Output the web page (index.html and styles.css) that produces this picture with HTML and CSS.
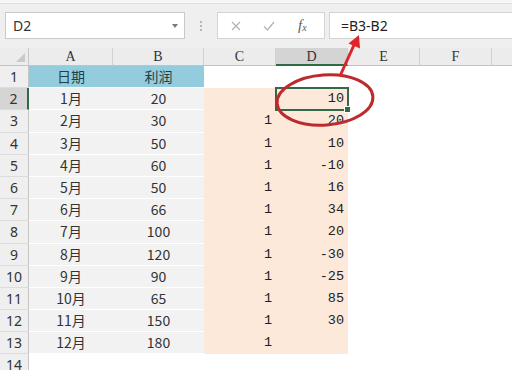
FILE: index.html
```html
<!DOCTYPE html>
<html>
<head>
<meta charset="utf-8">
<link rel="stylesheet" href="styles.css">
</head>
<body>
<div class="app">
  <div class="topstrip"></div>
  <div class="toolbar">
    <div class="namebox"><span class="name">D2</span><span class="drop"></span></div>
    <div class="grip"><i></i><i></i><i></i></div>
    <div class="fbtns">
      <svg class="ic" width="12" height="12" viewBox="0 0 12 12"><path d="M2 2L10 10M10 2L2 10" stroke="#b4b4b4" stroke-width="1.3" fill="none"/></svg>
      <svg class="ic" width="14" height="12" viewBox="0 0 14 12"><path d="M2 6.5L5.5 10L12 2" stroke="#b4b4b4" stroke-width="1.3" fill="none"/></svg>
      <span class="fx">f<sub>x</sub></span>
    </div>
    <div class="formula">=B3-B2</div>
  </div>
  <div class="sheet">
    <div class="ch corner"><span class="tri"></span></div>
    <div class="ch">A</div><div class="ch">B</div><div class="ch">C</div><div class="ch sel">D</div><div class="ch">E</div><div class="ch">F</div><div class="ch last"></div>

    <div class="rh">1</div><div class="c hd">日期</div><div class="c hd">利润</div><div class="c"></div><div class="c"></div><div class="c"></div><div class="c"></div><div class="c"></div>

    <div class="rh sel">2</div><div class="c ab">1月</div><div class="c ab">20</div><div class="c pe num"></div><div class="c pe num active">10</div><div class="c"></div><div class="c"></div><div class="c"></div>
    <div class="rh">3</div><div class="c ab">2月</div><div class="c ab">30</div><div class="c pe num">1</div><div class="c pe num">20</div><div class="c"></div><div class="c"></div><div class="c"></div>
    <div class="rh">4</div><div class="c ab">3月</div><div class="c ab">50</div><div class="c pe num">1</div><div class="c pe num">10</div><div class="c"></div><div class="c"></div><div class="c"></div>
    <div class="rh">5</div><div class="c ab">4月</div><div class="c ab">60</div><div class="c pe num">1</div><div class="c pe num">-10</div><div class="c"></div><div class="c"></div><div class="c"></div>
    <div class="rh">6</div><div class="c ab">5月</div><div class="c ab">50</div><div class="c pe num">1</div><div class="c pe num">16</div><div class="c"></div><div class="c"></div><div class="c"></div>
    <div class="rh">7</div><div class="c ab">6月</div><div class="c ab">66</div><div class="c pe num">1</div><div class="c pe num">34</div><div class="c"></div><div class="c"></div><div class="c"></div>
    <div class="rh">8</div><div class="c ab">7月</div><div class="c ab">100</div><div class="c pe num">1</div><div class="c pe num">20</div><div class="c"></div><div class="c"></div><div class="c"></div>
    <div class="rh">9</div><div class="c ab">8月</div><div class="c ab">120</div><div class="c pe num">1</div><div class="c pe num">-30</div><div class="c"></div><div class="c"></div><div class="c"></div>
    <div class="rh">10</div><div class="c ab">9月</div><div class="c ab">90</div><div class="c pe num">1</div><div class="c pe num">-25</div><div class="c"></div><div class="c"></div><div class="c"></div>
    <div class="rh">11</div><div class="c ab">10月</div><div class="c ab">65</div><div class="c pe num">1</div><div class="c pe num">85</div><div class="c"></div><div class="c"></div><div class="c"></div>
    <div class="rh">12</div><div class="c ab">11月</div><div class="c ab">150</div><div class="c pe num">1</div><div class="c pe num">30</div><div class="c"></div><div class="c"></div><div class="c"></div>
    <div class="rh">13</div><div class="c ab">12月</div><div class="c ab">180</div><div class="c pe num">1</div><div class="c pe num"></div><div class="c"></div><div class="c"></div><div class="c"></div>
    <div class="rh">14</div><div class="c"></div><div class="c"></div><div class="c"></div><div class="c"></div><div class="c"></div><div class="c"></div><div class="c"></div>
  </div>
  <svg class="annot" width="512" height="370" viewBox="0 0 512 370">
    <ellipse cx="325" cy="100" rx="48" ry="25" transform="rotate(-4 325 100)" fill="none" stroke="#bd2a2e" stroke-width="3"/>
    <line x1="340" y1="76" x2="354" y2="45" stroke="#d9262b" stroke-width="3"/>
    <polygon points="359,35 360,48.5 348.5,43.5" fill="#e0242a"/>
  </svg>
</div>
</body>
</html>
```
FILE: styles.css
```css
html, body {
  margin: 0;
  padding: 0;
  background: #ffffff;
}
.app {
  position: relative;
  width: 512px;
  height: 370px;
  overflow: hidden;
  font-family: "Noto Sans CJK SC", "Noto Sans", sans-serif;
  background: #fff;
}
.topstrip {
  height: 3px;
  background: #f6f6f6;
  border-bottom: 1px solid #dedede;
}
.toolbar {
  height: 44px;
  box-sizing: border-box;
  padding-top: 8px;
  background: #efefef;
  display: flex;
  align-items: flex-start;
}
.namebox {
  margin-left: 5px;
  width: 180px;
  height: 27px;
  box-sizing: border-box;
  background: #fff;
  border: 1px solid #c9c9c9;
  display: flex;
  align-items: center;
  justify-content: space-between;
  padding: 0 6px 0 7px;
}
.name {
  font-family: "Noto Sans", sans-serif;
  font-size: 14px;
  color: #333;
}
.drop {
  width: 0;
  height: 0;
  border-left: 3.5px solid transparent;
  border-right: 3.5px solid transparent;
  border-top: 4px solid #7a7a7a;
}
.grip {
  width: 32px;
  height: 27px;
  display: flex;
  flex-direction: column;
  align-items: center;
  justify-content: center;
  gap: 2px;
}
.grip i {
  display: block;
  width: 2px;
  height: 2px;
  background: #b5b5b5;
}
.fbtns {
  width: 108px;
  height: 27px;
  box-sizing: border-box;
  background: #fff;
  border: 1px solid #d3d3d3;
  display: flex;
  align-items: center;
  padding-left: 12px;
  gap: 20px;
}
.fx {
  font-family: "Liberation Serif", serif;
  font-style: italic;
  font-size: 15px;
  color: #606060;
  margin-left: 2px;
}
.fx sub {
  font-size: 10px;
  vertical-align: -1px;
}
.formula {
  margin-left: 4px;
  flex: 1;
  height: 27px;
  box-sizing: border-box;
  background: #fff;
  border: 1px solid #d3d3d3;
  border-right: none;
  padding-left: 11px;
  font-family: "Noto Sans", sans-serif;
  font-size: 14px;
  line-height: 25px;
  color: #222;
}
.sheet {
  display: grid;
  grid-template-columns: 29px 84px 91px 72px 72px 72px 72px 1fr;
  grid-template-rows: 18px repeat(14, 22.2px);
}
.ch {
  background: #ececec;
  border-bottom: 1px solid #c3c3c3;
  border-right: 1px solid #d0d0d0;
  box-sizing: border-box;
  font-family: "Liberation Serif", serif;
  font-size: 14px;
  color: #333;
  text-align: center;
  line-height: 18px;
  position: relative;
}
.ch.sel {
  background: #d4d4d4;
  border-bottom: 2px solid #2f6a45;
}
.ch.last {
  border-right: none;
}
.corner {
  border-right: 1px solid #c8c8c8;
}
.tri {
  position: absolute;
  right: 3px;
  bottom: 3px;
  width: 0;
  height: 0;
  border-left: 9px solid transparent;
  border-bottom: 9px solid #c9c9c9;
}
.rh {
  background: #efefef;
  border-right: 1px solid #c6c6c6;
  border-bottom: 1px solid #dcdcdc;
  box-sizing: border-box;
  text-align: center;
  font-family: "Noto Sans", sans-serif;
  font-size: 14px;
  line-height: 21px;
  color: #333;
}
.rh.sel {
  background: #d5d5d5;
  border-right: 2px solid #2f6a45;
}
.c {
  box-sizing: border-box;
  position: relative;
}
.hd {
  background: #93cddd;
  border-bottom: 1px solid #fff;
  text-align: center;
  font-size: 14px;
  line-height: 21px;
  color: #1f3f4a;
}
.ab {
  background: #f2f2f3;
  border-bottom: 1px solid #fff;
  text-align: center;
  font-size: 14px;
  line-height: 21px;
  color: #333;
}
.pe {
  background: #fce9da;
}
.num {
  text-align: right;
  padding-right: 4px;
  font-family: "Liberation Mono", monospace;
  font-size: 13.5px;
  line-height: 22px;
  color: #222;
}
.active {
  z-index: 2;
  outline: 2px solid #35684a;
  outline-offset: -1px;
}
.active::after {
  content: "";
  position: absolute;
  right: -3px;
  bottom: -3px;
  width: 5px;
  height: 5px;
  background: #35684a;
  border: 1px solid #fff;
}
.annot {
  position: absolute;
  left: 0;
  top: 0;
  z-index: 5;
  pointer-events: none;
}
```
